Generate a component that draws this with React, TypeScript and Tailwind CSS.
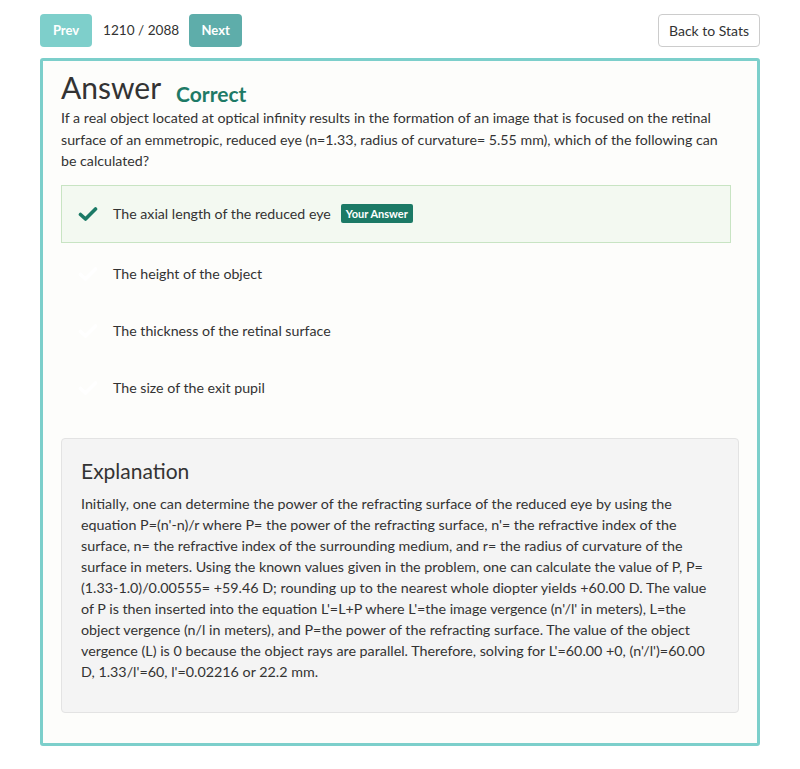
import React from 'react';

const CheckIcon: React.FC<{ className?: string }> = ({ className }) => (
    <svg width="20" height="16" viewBox="0 0 20 16" className={className}>
        <path d="M2.5 8.5 L7.5 13 L17.5 3" fill="none" stroke="currentColor" strokeWidth="3.6" strokeLinecap="round" strokeLinejoin="round" />
    </svg>
);

const options = [
    { text: 'The axial length of the reduced eye', selected: true },
    { text: 'The height of the object', selected: false },
    { text: 'The thickness of the retinal surface', selected: false },
    { text: 'The size of the exit pupil', selected: false },
];

const explanation =
    "Initially, one can determine the power of the refracting surface of the reduced eye by using the equation P=(n'-n)/r where P= the power of the refracting surface, n'= the refractive index of the surface, n= the refractive index of the surrounding medium, and r= the radius of curvature of the surface in meters. Using the known values given in the problem, one can calculate the value of P, P=(1.33-1.0)/0.00555= +59.46 D; rounding up to the nearest whole diopter yields +60.00 D. The value of P is then inserted into the equation L'=L+P where L'=the image vergence (n'/l' in meters), L=the object vergence (n/l in meters), and P=the power of the refracting surface. The value of the object vergence (L) is 0 because the object rays are parallel. Therefore, solving for L'=60.00 +0, (n'/l')=60.00 D, 1.33/l'=60, l'=0.02216 or 22.2 mm.";

export default function App() {
    return (
        <div className="min-h-[769px] w-[800px] bg-white px-10 pt-[14px] text-[#333] font-['Lato','Open_Sans',sans-serif]">
            <div className="flex items-center justify-between">
                <div className="flex items-center gap-[10px]">
                    <button className="h-[33px] w-[52px] rounded-[4px] bg-[#7ecfcb] text-[13px] font-bold text-white">Prev</button>
                    <span className="ml-[1px] text-[13.6px] text-[#333]">1210 / 2088</span>
                    <button className="h-[33px] w-[53px] rounded-[4px] bg-[#5eadaa] text-[13px] font-bold text-white">Next</button>
                </div>
                <button className="h-[33px] w-[102px] rounded-[4px] border border-[#cccccc] bg-white text-[14px] text-[#333]">Back to Stats</button>
            </div>

            <div className="mt-[11px] rounded-[3px] border-[3px] border-[#7ccfcb] bg-[#fdfdfb] px-[18px] pb-[30px] pt-[8px]">
                <div className="flex items-end">
                    <h1 className="text-[30px] leading-[36px] text-[#333]">Answer</h1>
                    <span className="mb-[-3px] ml-[15px] text-[21px] font-bold leading-[28px] text-[#1e7a66]">Correct</span>
                </div>
                <p className="mt-[2px] w-[668px] text-[14.2px] leading-[21.5px]">
                    If a real object located at optical infinity results in the formation of an image that is focused on the retinal surface of an emmetropic, reduced eye (n=1.33, radius of curvature= 5.55 mm), which of the following can be calculated?
                </p>

                <div className="mt-[13px] mr-[8px] flex flex-col">
                    {options.map((o) =>
                        o.selected ? (
                            <div key={o.text} className="mb-[3px] flex h-[58px] items-center border border-[#c8e4c3] bg-[#f3f9f1] pl-[16px]">
                                <CheckIcon className="text-[#1b7a66]" />
                                <span className="ml-[15px] text-[14.2px]">{o.text}</span>
                                <span className="ml-[10px] rounded-[2px] bg-[#1b7a66] px-[5px] py-[3px] text-[11px] font-bold leading-[13px] text-white">
                                    Your Answer
                                </span>
                            </div>
                        ) : (
                            <div key={o.text} className="flex h-[57px] items-center pl-[17px]">
                                <CheckIcon className="text-white" />
                                <span className="ml-[15px] text-[14.2px]">{o.text}</span>
                            </div>
                        )
                    )}
                </div>

                <div className="mt-[21px] rounded-[4px] border border-[#e3e3e3] bg-[#f4f4f4] px-[19px] pb-[30px] pt-[18px]">
                    <h2 className="text-[21px] leading-[28px] text-[#333]">Explanation</h2>
                    <p className="mt-[8px] text-[14.3px] leading-[21px]">{explanation}</p>
                </div>
            </div>
        </div>
    );
}
